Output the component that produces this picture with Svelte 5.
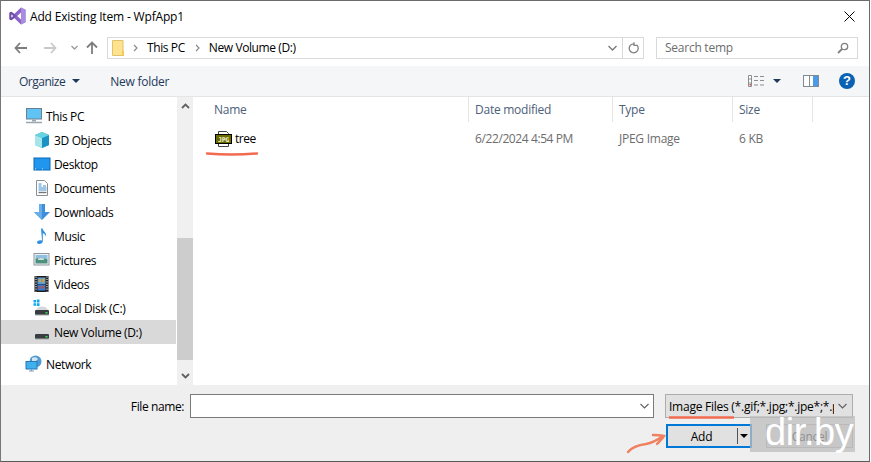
<script>
  const places = [
    { name: "3D Objects", icon: "cube" },
    { name: "Desktop", icon: "desktop" },
    { name: "Documents", icon: "docs" },
    { name: "Downloads", icon: "down" },
    { name: "Music", icon: "music" },
    { name: "Pictures", icon: "pictures" },
    { name: "Videos", icon: "videos" },
    { name: "Local Disk (C:)", icon: "diskc" },
    { name: "New Volume (D:)", icon: "disk", selected: true },
  ];
</script>

{#snippet icon(kind)}
  <svg class="ico" width="18" height="18" viewBox="0 0 18 18">
    {#if kind === "pc"}
      <rect x="1.5" y="1.5" width="15" height="10.5" fill="#5fc4f3" stroke="#6a7f90" />
      <path d="M7 12.5h4v2H7z" fill="#9aa7b0" />
      <path d="M1 15.5h16" stroke="#9aa7b0" stroke-width="1.5" />
    {:else if kind === "cube"}
      <path d="M9 1l7 3v10l-7 3-7-3V4z" fill="#35b5cf" />
      <path d="M2 4l7 3v10l-7-3z" fill="#a5e6ea" />
      <path d="M9 7l7-3v10l-7 3z" fill="#1a93c4" />
      <path d="M9 1l7 3-7 3-7-3z" fill="#6ad3e0" />
    {:else if kind === "desktop"}
      <rect x="1" y="3" width="16" height="12" fill="#2196ee" stroke="#0a67b8" />
      <path d="M2 14h14" stroke="#fff" stroke-width="0.8" stroke-dasharray="1 6" />
    {:else if kind === "docs"}
      <path d="M3.500 1.500h8l3 3v12h-11z" fill="#fff" stroke="#8a8f94" />
      <path d="M5.500 5h3M5.500 7h3M10 7h3M5.500 9h8M5.500 11h8" stroke="#3f8fd0" />
      <path d="M5.500 13.500h8" stroke="#777" stroke-width="1.400" />
    {:else if kind === "down"}
      <path d="M6 1h6v8h5l-8 8-8-8h5z" fill="#3f8fdc" />
      <path d="M6 1h3v16l-8-8h5z" fill="#67aee8" />
    {:else if kind === "music"}
      <path d="M8 1.500h1.600c.3 3 4.400 4 3.400 8-.5-2-2-3-3.200-3.200V14c0 2-2 3.200-4 3-2-.3-2.300-2-1-3 1.200-.9 2.800-1 4.200-.5z" fill="#2f8fe0" />
    {:else if kind === "pictures"}
      <rect x="1" y="2.500" width="15" height="11.500" fill="#eef2f4" stroke="#8f9599" />
      <path d="M2.500 4H14.500v4.500H2.500z" fill="#8fc0e4" />
      <path d="M2.500 8c3-1.800 6-1 12 .2v4.300h-12z" fill="#4f8f7e" />
      <path d="M5 7.500c2-.8 4-.8 6 0v1.500H5z" fill="#cfe4d8" />
    {:else if kind === "videos"}
      <rect x="1.500" y="1" width="14" height="16" fill="#1e1e1e" />
      <rect x="4.500" y="2.500" width="8" height="6.500" fill="#5f9fd8" />
      <rect x="4.500" y="9.500" width="8" height="6" fill="#2f7fe0" />
      <path d="M6 4h2v3H6zM9.500 3.500h2v4h-2z" fill="#d8a030" />
      <path d="M6 11h2v3H6zM9.500 10.500h2v3h-2z" fill="#c84a30" />
      <path d="M3 1.500v15M14 1.500v15" stroke="#ddd" stroke-width="1.200" stroke-dasharray="1.200 1.200" />
    {:else if kind === "diskc" || kind === "disk"}
      {#if kind === "diskc"}
        <path d="M.5 1H3v2.500H.5zM3.800 .6h2.700v2.900H3.800zM.5 4.200H3v2.500H.5zM3.800 4.200h2.700v2.900H3.800z" fill="#12a7ee" />
      {/if}
      <path d="M3 11c1-2.500 3-3.500 6-3.500s5 1 6 3.500z" fill="#d5d8da" />
      <rect x="2" y="11" width="14" height="5" rx="1" fill="#3a3d40" />
      <rect x="2" y="15.500" width="14" height="1" fill="#a8adb0" />
      <rect x="12.500" y="13" width="2" height="1.500" fill="#3fdc5a" />
    {:else if kind === "network"}
      <circle cx="10.500" cy="6.500" r="6" fill="#4f9ad0" />
      <path d="M7 3c2-1.500 5-1 6 1l-3 3-3-1z" fill="#cfe6f2" />
      <rect x="1" y="6.500" width="11" height="7.500" fill="#3fb1ee" stroke="#2a78b8" />
      <path d="M4 16h5M6.500 14v2" stroke="#7a9cb8" stroke-width="1.200" />
    {/if}
  </svg>
{/snippet}

<div class="dialog">
  <header class="title">
    <svg class="vs" width="17" height="18" viewBox="0 0 17 18">
      <path d="M12 .5l4.500 2.200v12.600L12 17.500 5.200 11 2.200 13.300 .5 12.300V5.700l1.700-1 3 2.300z" fill="#8a64c8" />
      <path d="M.5 5.700l1.700-1 3 2.300 1.800 2-1.800 2-3 2.300-1.700-1z" fill="#6c4aa6" />
      <path d="M12 .5l4.500 2.200v12.600L12 17.500z" fill="#a98be0" />
      <path d="M12 5.500L8.200 9l3.800 3.500z" fill="#fff" />
      <path d="M2.400 7.300v3.400L4.300 9z" fill="#fff" />
    </svg>
    <span>Add Existing Item - WpfApp1</span>
    <svg class="close" width="11" height="11" viewBox="0 0 11 11">
      <path d="M.5.500l10 10M10.500.500l-10 10" stroke="#000" stroke-width="1" fill="none" />
    </svg>
  </header>

  <div class="nav">
    <div class="arrows">
      <svg width="13" height="12" viewBox="0 0 13 12"><path d="M6 1L1.500 6 6 11M1.500 6H13" stroke="#7d7d7d" stroke-width="1.800" fill="none" /></svg>
      <svg class="fwd" width="13" height="12" viewBox="0 0 13 12"><path d="M7 1l4.500 5L7 11m4.500-5H0" stroke="#c9c9c9" stroke-width="1.800" fill="none" /></svg>
      <svg class="recent" width="7" height="5" viewBox="0 0 7 5"><path d="M.5 1l3 3 3-3" stroke="#9a9a9a" stroke-width="1.300" fill="none" /></svg>
      <svg class="up" width="12" height="13" viewBox="0 0 12 13"><path d="M1 6.500L6 1.500l5 5M6 1.500V13" stroke="#7d7d7d" stroke-width="1.800" fill="none" /></svg>
    </div>
    <div class="address">
      <svg class="folder" width="12" height="16" viewBox="0 0 12 16">
        <path d="M.5.500h10.500v15H.5z" fill="#ffe28e" stroke="#e0c26a" />
        <path d="M10 10.500h2V16h-2z" fill="#f3c959" />
      </svg>
      <svg class="crumb" width="5" height="8" viewBox="0 0 5 8"><path d="M1 1l3 3-3 3" stroke="#8a8a8a" stroke-width="1.200" fill="none" /></svg>
      <span>This PC</span>
      <svg class="crumb" width="5" height="8" viewBox="0 0 5 8"><path d="M1 1l3 3-3 3" stroke="#8a8a8a" stroke-width="1.200" fill="none" /></svg>
      <span>New Volume (D:)</span>
      <svg class="hist" width="9" height="6" viewBox="0 0 9 6"><path d="M.5 1l4 4 4-4" stroke="#777" stroke-width="1.300" fill="none" /></svg>
      <div class="refresh">
        <svg width="11" height="12" viewBox="0 0 11 12"><path d="M8.800 3A4.500 4.500 0 1 1 6 1.800M6 .2v3.200h3" stroke="#808080" stroke-width="1.300" fill="none" /></svg>
      </div>
    </div>
    <div class="search">
      <span>Search temp</span>
      <svg width="12" height="12" viewBox="0 0 12 12"><circle cx="7.500" cy="4.500" r="3.200" stroke="#808080" stroke-width="1.300" fill="none" /><path d="M5 7L1 11" stroke="#808080" stroke-width="1.800" /></svg>
    </div>
  </div>

  <div class="toolbar">
    <span class="organize">Organize</span>
    <i class="caret dark"></i>
    <span class="newfolder">New folder</span>
    <svg class="views" width="17" height="12" viewBox="0 0 17 12">
      <path d="M.5.500h3v11h-3zM.5 4h3M.5 8h3" stroke="#8a8f94" fill="#fff" />
      <rect x="1.500" y="9" width="1.500" height="1.500" fill="#d84a3a" />
      <path d="M6 1.500h4M12 1.500h4M6 5.500h4M12 5.500h4M6 10h4M12 10h4" stroke="#8a8f94" />
    </svg>
    <i class="caret dark views-caret"></i>
    <svg class="pane" width="16" height="12" viewBox="0 0 16 12">
      <rect width="16" height="12" fill="#7f8a94" />
      <rect x="1" y="1" width="5" height="10" fill="#fff" />
      <rect x="7" y="1" width="3" height="10" fill="#fff" />
      <rect x="10" y="1" width="5" height="10" fill="#4a9ae8" />
    </svg>
    <span class="help">?</span>
  </div>

  <div class="main">
    <nav class="side">
      <div class="row top">{@render icon("pc")}<span>This PC</span></div>
      {#each places as p}
        <div class="row" class:selected={p.selected}>{@render icon(p.icon)}<span>{p.name}</span></div>
      {/each}
      <div class="row top network">{@render icon("network")}<span>Network</span></div>
    </nav>
    <div class="scroll">
      <svg width="9" height="6" viewBox="0 0 9 6"><path d="M1 5l3.500-3.500L8 5" stroke="#606060" stroke-width="1.800" fill="none" /></svg>
      <div class="track"><div class="thumb"></div></div>
      <svg width="9" height="6" viewBox="0 0 9 6"><path d="M1 1l3.500 3.500L8 1" stroke="#606060" stroke-width="1.800" fill="none" /></svg>
    </div>
    <section class="files">
      <div class="cols">
        <div class="name">Name</div>
        <div class="date">Date modified</div>
        <div class="type">Type</div>
        <div class="size">Size</div>
      </div>
      <div class="file">
        <div class="name">
          <svg width="17" height="16" viewBox="0 0 17 16">
            <path d="M3.500 .5h8l2 2v13h-10z" fill="#fff" stroke="#444" />
            <rect x=".5" y="3.500" width="16" height="9" fill="#6b6b00" stroke="#000" />
            <text x="8.500" y="10.500" class="jpg">JPG</text>
          </svg>
          <span>tree</span>
        </div>
        <div class="date">6/22/2024 4:54 PM</div>
        <div class="type">JPEG Image</div>
        <div class="size">6 KB</div>
      </div>
    </section>
  </div>

  <footer class="foot">
    <div class="line">
      <label for="fname">File name:</label>
      <div class="input">
        <input id="fname" type="text" />
        <svg width="9" height="6" viewBox="0 0 9 6"><path d="M.5 1l4 4 4-4" stroke="#606060" stroke-width="1.100" fill="none" /></svg>
      </div>
      <div class="combo">
        <span>Image Files (*.gif;*.jpg;*.jpe*;*.p</span>
        <svg width="9" height="6" viewBox="0 0 9 6"><path d="M.5 1l4 4 4-4" stroke="#606060" stroke-width="1.100" fill="none" /></svg>
      </div>
    </div>
    <div class="line buttons">
      <button class="add"><span>Add</span><i class="split"></i><i class="caret"></i></button>
      <button class="cancel">Cancel</button>
    </div>
  </footer>

  <div class="mark">dir.by</div>
  <svg class="notes" width="871" height="462" viewBox="0 0 871 462">
    <path d="M207 153.500c16 1.200 33 1.200 50 0" stroke="#f26b50" stroke-width="2.500" fill="none" stroke-linecap="round" />
    <path d="M669 417.500h65" stroke="#f26b50" stroke-width="2.500" fill="none" />
    <path d="M628 452c4-5 10-7 18-8 6-1 10-3 17-8M653 435c4 0 7 0 11 1-2 3-4 5-7 8" stroke="#f0805f" stroke-width="2.400" fill="none" stroke-linecap="round" />
  </svg>
</div>

<style>
  :global(body) {
    margin: 0;
    background: #fff;
  }

  .dialog {
    position: relative;
    width: 870px;
    height: 462px;
    box-sizing: border-box;
    border: 1px solid #6b6b6b;
    border-bottom-color: #5a5a5a;
    border-left-color: #777;
    display: flex;
    flex-direction: column;
    background: #fff;
    overflow: hidden;
    font: 12px "Open Sans", "Noto Sans", sans-serif;
    letter-spacing: -0.25px;
    color: #000;
  }

  .title {
    height: 29px;
    flex: none;
    box-sizing: border-box;
    padding: 1px 11px 0 8px;
    display: flex;
    align-items: center;
    letter-spacing: -0.17px;
  }
  .title span {
    margin-left: 4px;
  }
  .close {
    margin-left: auto;
    margin-right: 3px;
  }

  .nav {
    height: 36px;
    flex: none;
    display: flex;
    align-items: center;
    padding-bottom: 1px;
    box-sizing: border-box;
  }
  .arrows {
    width: 106px;
    display: flex;
    align-items: center;
    padding-left: 13px;
    box-sizing: border-box;
  }
  .fwd { margin-left: 17px; }
  .recent { margin-left: 14px; }
  .up { margin-left: 8px; }
  .address {
    width: 537px;
    height: 22px;
    box-sizing: border-box;
    border: 1px solid #d9d9d9;
    display: flex;
    align-items: center;
    padding-left: 4px;
    letter-spacing: -0.4px;
  }
  .folder { margin-right: 9px; }
  .crumb { margin-right: 9px; }
  .address span { margin-right: 10px; }
  .hist { margin-left: auto; margin-right: 5px; }
  .refresh {
    width: 20px;
    height: 100%;
    border-left: 1px solid #d9d9d9;
    display: flex;
    align-items: center;
    justify-content: center;
  }
  .search {
    width: 202px;
    height: 22px;
    box-sizing: border-box;
    margin-left: 12px;
    border: 1px solid #d9d9d9;
    display: flex;
    align-items: center;
    justify-content: space-between;
    padding: 0 8px;
    color: #6d6d6d;
  }

  .toolbar {
    height: 31px;
    flex: none;
    box-sizing: border-box;
    background: #f5f6f7;
    border-bottom: 1px solid #e5e5e5;
    display: flex;
    align-items: center;
    padding-left: 18px;
    color: #1e395b;
  }
  .organize { letter-spacing: -0.5px; }
  .caret {
    width: 0;
    height: 0;
    border: 4px solid transparent;
    border-top: 4px solid #000;
    border-bottom: 0;
  }
  .caret.dark {
    border-top-color: #1e395b;
    margin-left: 7px;
  }
  .newfolder { margin-left: 30px; }
  .views { margin-left: auto; }
  .caret.views-caret { margin-left: 8px; }
  .pane { margin-left: 22px; }
  .help {
    width: 16px;
    height: 16px;
    margin: 0 14px 0 20px;
    border-radius: 50%;
    background: #0a62b4;
    color: #fff;
    font: bold 13px/16px "Liberation Sans", sans-serif;
    letter-spacing: 0;
    text-align: center;
  }

  .main {
    flex: 1;
    min-height: 0;
    display: flex;
  }
  .side {
    width: 175px;
    padding-top: 7px;
    box-sizing: border-box;
    letter-spacing: -0.35px;
  }
  .row {
    height: 24px;
    display: flex;
    align-items: center;
    padding-left: 32px;
    gap: 3px;
  }
  .row.top { padding-left: 24px; }
  .row.network { margin-top: 8px; }
  .row.selected { background: #d9d9d9; }
  .ico { flex: none; }

  .scroll {
    width: 16px;
    margin-left: 1px;
    background: #f0f0f0;
    display: flex;
    flex-direction: column;
    align-items: center;
    padding: 6px 0;
    box-sizing: border-box;
  }
  .track {
    flex: 1;
    width: 100%;
    padding-top: 129px;
    padding-bottom: 13px;
    box-sizing: border-box;
    display: flex;
  }
  .thumb {
    flex: 1;
    background: #cdcdcd;
  }

  .files {
    flex: 1;
    min-width: 0;
  }
  .cols, .file {
    display: grid;
    grid-template-columns: 276px 144px 120px 80px;
  }
  .cols {
    height: 25px;
    align-items: center;
    color: #4c607a;
  }
  .cols div {
    height: 100%;
    display: flex;
    align-items: center;
    padding-left: 6px;
    border-right: 1px solid #e5e5e5;
  }
  .cols .name { padding-left: 21px; }
  .file {
    margin-top: 4px;
    height: 25px;
    align-items: center;
    color: #6d6d6d;
  }
  .file div { padding-left: 6px; }
  .file .date { letter-spacing: -0.4px; }
  .file .name {
    padding-left: 22px;
    display: flex;
    align-items: center;
    gap: 3px;
    color: #000;
    letter-spacing: -0.5px;
  }
  .jpg {
    font: bold 6.500px "DejaVu Sans Mono", monospace;
    letter-spacing: -0.2px;
    fill: #f4f4d0;
    text-anchor: middle;
  }

  .foot {
    height: 76px;
    flex: none;
    background: #efefef;
    box-sizing: border-box;
    padding-top: 9px;
  }
  .line {
    display: flex;
    align-items: center;
    height: 24px;
  }
  .line label {
    width: 183px;
    text-align: right;
    color: #000;
    letter-spacing: -0.4px;
  }
  .input {
    width: 464px;
    height: 24px;
    box-sizing: border-box;
    margin-left: 6px;
    border: 1px solid #7a7a7a;
    background: #fff;
    display: flex;
    align-items: center;
    padding-right: 4px;
  }
  .input input {
    flex: 1;
    min-width: 0;
    border: 0;
    outline: 0;
    background: none;
  }
  .combo {
    width: 188px;
    height: 24px;
    box-sizing: border-box;
    margin-left: 11px;
    border: 1px solid #adadad;
    background: #e1e1e1;
    display: flex;
    align-items: center;
    justify-content: space-between;
    padding: 0 5px 0 3px;
    white-space: nowrap;
  }
  .combo span {
    width: 165px;
    overflow: hidden;
  }
  .buttons {
    justify-content: flex-end;
    margin-top: 6px;
    padding-right: 16px;
    gap: 14px;
  }
  button {
    height: 24px;
    font: inherit;
    letter-spacing: inherit;
    color: #000;
    background: #e1e1e1;
    padding: 0;
    box-sizing: border-box;
  }
  .add {
    width: 86px;
    border: 2px solid #0078d7;
    display: flex;
    align-items: center;
  }
  .add span {
    flex: 1;
    text-align: center;
    padding-right: 2px;
  }
  .split {
    width: 1px;
    height: 16px;
    background: #555;
    margin-right: 2px;
  }
  .add .caret {
    margin-right: 2px;
  }
  .cancel {
    width: 87px;
    border: 1px solid #adadad;
    color: #000;
  }

  .mark {
    position: absolute;
    left: 749px;
    top: 415px;
    width: 105px;
    height: 36px;
    box-sizing: border-box;
    padding-left: 15px;
    background: rgba(190, 190, 190, 0.75);
    color: #fff;
    font: 38px/32px "Liberation Sans", sans-serif;
    letter-spacing: -0.4px;
    white-space: nowrap;
  }
  .notes {
    position: absolute;
    left: -1px;
    top: -1px;
    pointer-events: none;
  }
</style>
